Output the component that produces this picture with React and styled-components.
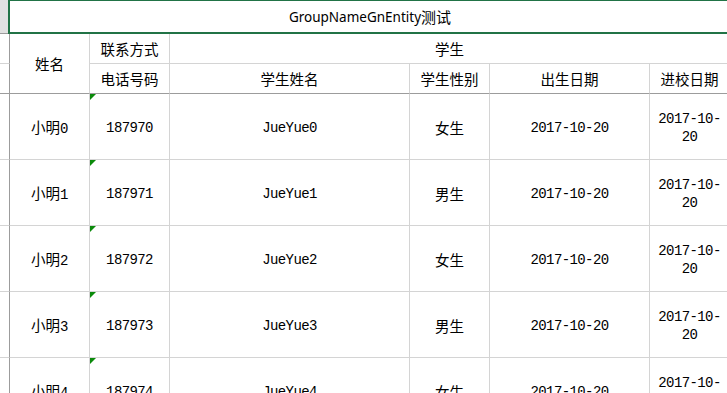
import React from "react";
import styled, { createGlobalStyle } from "styled-components";

const Global = createGlobalStyle`
  html, body {
    margin: 0;
    padding: 0;
    background: #ffffff;
    overflow: hidden;
  }
  * {
    box-sizing: border-box;
  }
`;

const Sheet = styled.div`
  display: grid;
  grid-template-columns: 10px 80px 80px 240px 80px 160px 80px;
  grid-template-rows: 34px 30px 30px repeat(5, 66px);
  width: 730px;
  font-family: "Noto Sans CJK SC", sans-serif;
  font-size: 14.5px;
  color: #000000;
`;

const RowHead = styled.div`
  background: ${(p) => (p.$sel ? "#e1e1e1" : "#ffffff")};
  border-right: 1px solid #9c9c9c;
  border-bottom: 1px solid ${(p) => (p.$sel || p.$freeze ? "#9c9c9c" : "#d4d4d4")};
`;

const Cell = styled.div`
  position: relative;
  display: flex;
  align-items: center;
  justify-content: center;
  text-align: center;
  padding: ${(p) => (p.$data ? "2px 4px 0" : "0 4px")};
  line-height: 18px;
  grid-column: span ${(p) => p.$span || 1};
  grid-row: span ${(p) => p.$rows || 1};
  border-right: 1px solid #d4d4d4;
  border-bottom: 1px solid ${(p) => (p.$freeze ? "#9c9c9c" : "#d4d4d4")};
  white-space: normal;
  overflow: hidden;

  ${(p) =>
    p.$flag &&
    `
    &::before {
      content: "";
      position: absolute;
      top: 0;
      left: 0;
      border-top: 6px solid #0b8a0b;
      border-right: 6px solid transparent;
    }
  `}
`;

const Title = styled(Cell)`
  overflow: visible;
  font-family: "Noto Sans", "Noto Sans CJK SC", sans-serif;
  font-size: 13.5px;
  border-right: none;
  border-bottom: 1px solid #ffffff;
  padding-top: 1px;

  &::after {
    content: "";
    position: absolute;
    top: -1px;
    left: -2px;
    right: -2px;
    bottom: -1px;
    border: 2px solid #217346;
    pointer-events: none;
  }
`;

const Han = styled.span`
  font-family: "Noto Sans CJK SC", sans-serif;
  font-size: 15px;
`;

const Mono = styled.span`
  font-family: "Liberation Mono", "Noto Sans CJK SC", monospace;
  font-size: 14px;
  letter-spacing: -0.6px;
`;

const rows = [0, 1, 2, 3, 4].map((i) => ({
  name: "小明",
  n: String(i),
  phone: "18797" + i,
  en: "JueYue" + i,
  sex: i % 2 === 0 ? "女生" : "男生",
  birth: "2017-10-20",
  enter: "2017-10-20",
}));

export default function App() {
  return (
    <>
      <Global />
      <Sheet>
        <RowHead $sel />
        <Title $span={6}>
          GroupNameGnEntity<Han>测试</Han>
        </Title>

        <RowHead />
        <Cell $rows={2} $freeze>
          姓名
        </Cell>
        <Cell>联系方式</Cell>
        <Cell $span={4}>学生</Cell>

        <RowHead $freeze />
        <Cell $freeze>电话号码</Cell>
        <Cell $freeze>学生姓名</Cell>
        <Cell $freeze>学生性别</Cell>
        <Cell $freeze>出生日期</Cell>
        <Cell $freeze>进校日期</Cell>

        {rows.map((r) => (
          <React.Fragment key={r.en}>
            <RowHead />
            <Cell $data>
              <span>
                {r.name}
                <Mono>{r.n}</Mono>
              </span>
            </Cell>
            <Cell $data $flag>
              <Mono>{r.phone}</Mono>
            </Cell>
            <Cell $data>
              <Mono>{r.en}</Mono>
            </Cell>
            <Cell $data>{r.sex}</Cell>
            <Cell $data>
              <Mono>{r.birth}</Mono>
            </Cell>
            <Cell $data>
              <Mono>
                {r.enter.slice(0, 8)}
                <wbr />
                {r.enter.slice(8)}
              </Mono>
            </Cell>
          </React.Fragment>
        ))}
      </Sheet>
    </>
  );
}
